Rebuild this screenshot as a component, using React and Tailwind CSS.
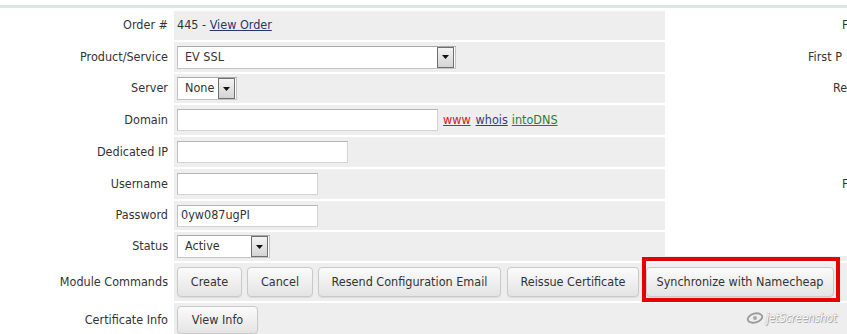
import React from "react";

const FONT = "font-['Tahoma','DejaVu_Sans_Condensed','Liberation_Sans',sans-serif]";

function Select({ width, text }) {
  return (
    <div className={`${width} h-[23px] bg-white border border-[#c4c4c4] border-t-[#a9a9a9] flex items-center justify-between pl-[7px] pr-[1px]`}>
      <span>{text}</span>
      <div className="w-[17px] h-[21px] border border-[#6f6f6f] bg-gradient-to-b from-[#f4f4f4] to-[#d4d4d4] flex items-center justify-center">
        <svg width="7" height="4" viewBox="0 0 7 4"><path d="M0 0h7L3.5 4z" fill="#111" /></svg>
      </div>
    </div>
  );
}

function Input({ width, value }) {
  return (
    <div className={`${width} h-[22px] bg-white border border-[#d2d2d2] border-t-[#b4b4b4] border-l-[#c0c0c0] flex items-center pl-[3px]`}>
      {value}
    </div>
  );
}

function Btn({ width, h = "h-[30px]", children }) {
  return (
    <div className={`${width} ${h} shrink-0 rounded-[4px] border border-[#c9c9c9] bg-gradient-to-b from-[#fbfbfb] to-[#e4e4e4] shadow-[0_1px_1px_rgba(0,0,0,0.08)] flex items-center justify-center text-[#333]`}>
      {children}
    </div>
  );
}

function Row({ label, h, children, right, rightPad }) {
  return (
    <div className={`flex ${h}`}>
      <div className="w-[174px] shrink-0 bg-white flex items-center justify-end pr-[6px]">{label}</div>
      <div className="w-[491px] shrink-0 bg-[#eeeeee] flex items-center pl-[3px]">{children}</div>
      <div className={`flex-1 bg-white flex items-center whitespace-nowrap ${rightPad || ""}`}>{right}</div>
    </div>
  );
}

export default function App() {
  return (
    <div className={`w-[847px] h-[334px] bg-white overflow-hidden relative ${FONT} text-[12.5px] text-[#333]`}>
      <div className="h-[5px]" />
      <div className="h-[3px] bg-[#dfe4e4]" />
      <div className="h-[3px]" />
      <div className="flex flex-col gap-[2px]">
        <Row label="Order #" h="h-[29px]" right="F" rightPad="pl-[177px]">
          <span>445 - <span className="underline text-[#26376b]">View Order</span></span>
        </Row>
        <Row label="Product/Service" h="h-[30px]" right="First P" rightPad="pl-[143px]">
          <Select width="w-[279px]" text="EV SSL" />
        </Row>
        <Row label="Server" h="h-[29px]" right="Re" rightPad="pl-[168px]">
          <Select width="w-[60px]" text="None" />
        </Row>
        <Row label="Domain" h="h-[30px]">
          <Input width="w-[261px]" />
          <span className="ml-[5px] underline text-[#cc2020]">www</span>
          <span className="ml-[5px] underline text-[#373c7c]">whois</span>
          <span className="ml-[4px] underline text-[#1f8040]">intoDNS</span>
        </Row>
        <Row label="Dedicated IP" h="h-[30px]">
          <Input width="w-[171px]" />
        </Row>
        <Row label="Username" h="h-[30px]" right="F" rightPad="pl-[177px]">
          <Input width="w-[141px]" />
        </Row>
        <Row label="Password" h="h-[29px]">
          <Input width="w-[141px]" value="0yw087ugPI" />
        </Row>
        <div className="flex h-[29px]">
          <div className="w-[174px] shrink-0 bg-white flex items-center justify-end pr-[6px]">Status</div>
          <div className="w-[491px] shrink-0 bg-[#eeeeee] flex items-center pl-[3px]">
            <Select width="w-[93px]" text="Active" />
          </div>
          <div className="flex-1 bg-[#eeeeee]">
            <div className="h-[24px] bg-white" />
          </div>
        </div>
        <div className="flex h-[38px]">
          <div className="w-[174px] shrink-0 bg-white flex items-center justify-end pr-[6px]">Module Commands</div>
          <div className="flex-1 bg-[#eeeeee] flex items-center pl-[3px]">
            <Btn width="w-[65px]">Create</Btn>
            <div className="ml-[5px]"><Btn width="w-[66px]">Cancel</Btn></div>
            <div className="ml-[5px]"><Btn width="w-[183px]">Resend Configuration Email</Btn></div>
            <div className="ml-[6px]"><Btn width="w-[132px]">Reissue Certificate</Btn></div>
            <div className="ml-[7px]"><Btn width="w-[188px]">Synchronize with Namecheap</Btn></div>
          </div>
        </div>
        <div className="flex h-[34px]">
          <div className="w-[174px] shrink-0 bg-white flex items-center justify-end pr-[6px]">Certificate Info</div>
          <div className="flex-1 bg-[#eeeeee] flex items-center pl-[3px]">
            <Btn width="w-[81px]" h="h-[28px]">View Info</Btn>
          </div>
        </div>
      </div>
      <div className="absolute left-[642px] top-[257px] w-[198px] h-[45px] border-4 border-[#e60000]" />
      <div className="absolute left-[746px] top-[312px] flex items-center gap-[2px] text-white [text-shadow:0_0_1px_#8a8a8a,1px_1px_0_#b0b0b0]">
        <svg width="18" height="12" viewBox="0 0 22 14">
          <ellipse cx="11" cy="7" rx="9" ry="5.5" fill="none" stroke="#9a9a9a" strokeWidth="2.2" transform="rotate(-15 11 7)" />
          <circle cx="11" cy="7" r="2.5" fill="#a8a8a8" />
        </svg>
        <span className="italic text-[12px] font-['DejaVu_Sans_Condensed',sans-serif] leading-none tracking-[-0.3px]">jetScreenshot</span>
      </div>
    </div>
  );
}
